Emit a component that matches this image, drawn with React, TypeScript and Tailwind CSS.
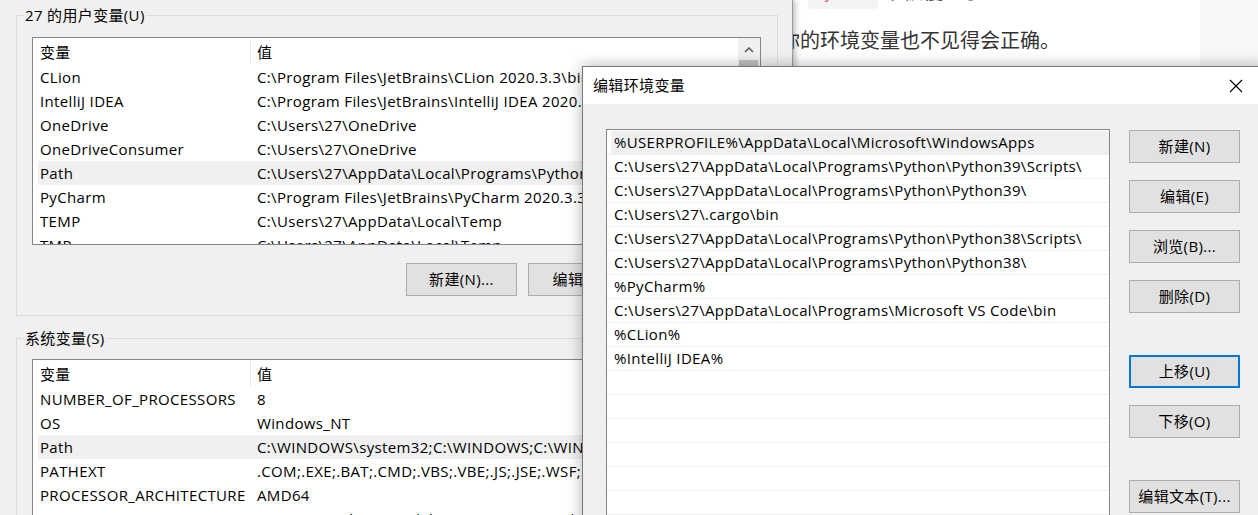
import React from "react";

const userVars: [string, string][] = [
  ["CLion", "C:\\Program Files\\JetBrains\\CLion 2020.3.3\\bin"],
  ["IntelliJ IDEA", "C:\\Program Files\\JetBrains\\IntelliJ IDEA 2020.3.3\\bin"],
  ["OneDrive", "C:\\Users\\27\\OneDrive"],
  ["OneDriveConsumer", "C:\\Users\\27\\OneDrive"],
  ["Path", "C:\\Users\\27\\AppData\\Local\\Programs\\Python\\Python39\\Scripts\\;"],
  ["PyCharm", "C:\\Program Files\\JetBrains\\PyCharm 2020.3.3\\bin"],
  ["TEMP", "C:\\Users\\27\\AppData\\Local\\Temp"],
  ["TMP", "C:\\Users\\27\\AppData\\Local\\Temp"],
];

const sysVars: [string, string][] = [
  ["NUMBER_OF_PROCESSORS", "8"],
  ["OS", "Windows_NT"],
  ["Path", "C:\\WINDOWS\\system32;C:\\WINDOWS;C:\\WINDOWS\\System32\\Wbem;"],
  ["PATHEXT", ".COM;.EXE;.BAT;.CMD;.VBS;.VBE;.JS;.JSE;.WSF;.WSH;.MSC"],
  ["PROCESSOR_ARCHITECTURE", "AMD64"],
  ["PROCESSOR_IDENTIFIER", "AMD64 Family 23 Model 24 Stepping 1, AuthenticAMD"],
];

const paths: string[] = [
  "%USERPROFILE%\\AppData\\Local\\Microsoft\\WindowsApps",
  "C:\\Users\\27\\AppData\\Local\\Programs\\Python\\Python39\\Scripts\\",
  "C:\\Users\\27\\AppData\\Local\\Programs\\Python\\Python39\\",
  "C:\\Users\\27\\.cargo\\bin",
  "C:\\Users\\27\\AppData\\Local\\Programs\\Python\\Python38\\Scripts\\",
  "C:\\Users\\27\\AppData\\Local\\Programs\\Python\\Python38\\",
  "%PyCharm%",
  "C:\\Users\\27\\AppData\\Local\\Programs\\Microsoft VS Code\\bin",
  "%CLion%",
  "%IntelliJ IDEA%",
  "",
  "",
  "",
  "",
  "",
  "",
];

function Btn({ label, focused, className }: { label: string; focused?: boolean; className?: string }) {
  return (
    <div
      className={`flex h-[33px] w-[111px] shrink-0 items-center justify-center bg-[#e1e1e1] text-[15px] text-black ${
        focused ? "border-2 border-[#0078d7]" : "border border-[#adadad]"
      } ${className ?? ""}`}
    >
      {label}
    </div>
  );
}

function ListView({ rows, selected, tall }: { rows: [string, string][]; selected: number; tall?: boolean }) {
  return (
    <div
      className={`flex w-[729px] overflow-hidden border border-[#828790] bg-white ${tall ? "h-[220px]" : "h-[208px]"}`}
    >
      <div className="flex min-w-0 flex-1 flex-col">
        <div className="flex h-[27px] shrink-0 items-center">
          <div className="w-[217px] pl-[7px] pt-[1px]">变量</div>
          <div className="my-[1px] w-px self-stretch bg-[#e5e5e5]"></div>
          <div className="pl-[6px] pt-[1px]">值</div>
        </div>
        {rows.map(([k, v], i) => (
          <div
            key={k + i}
            className={`ml-[5px] flex h-6 shrink-0 items-center ${i === selected ? "bg-[#f0f0f0]" : ""}`}
          >
            <div className="w-[219px] shrink-0 overflow-hidden whitespace-nowrap pl-[2px]">{k}</div>
            <div className="min-w-0 flex-1 overflow-hidden whitespace-nowrap">{v}</div>
          </div>
        ))}
      </div>
      <div className="flex w-[22px] shrink-0 flex-col bg-[#f0f0f0]">
        <div className="flex h-[22px] shrink-0 items-center justify-center pt-[2px]">
          <svg width="10" height="6" viewBox="0 0 10 6">
            <polyline points="1,5 5,1 9,5" fill="none" stroke="#606060" strokeWidth="1.6" />
          </svg>
        </div>
        <div className="ml-[1px] mr-[2px] h-[140px] bg-[#c1c1c1]"></div>
      </div>
    </div>
  );
}

function GroupBox({
  label,
  className,
  children,
}: {
  label: string;
  className: string;
  children: React.ReactNode;
}) {
  return (
    <div className={`relative w-[762px] shrink-0 border border-[#dcdcdc] ${className}`}>
      <span className="absolute -top-[11px] left-[7px] bg-[#f0f0f0] px-[1px] leading-[20px]">{label}</span>
      {children}
    </div>
  );
}

export default function App() {
  return (
    <div className="relative h-[515px] w-[1258px] overflow-hidden font-['Open_Sans','Noto_Sans_CJK_SC',sans-serif] text-[15px] tracking-[0.35px] text-black">
      {/* web page in the background */}
      <div className="flex h-full w-full">
        <div className="flex w-[1200px] shrink-0 flex-col bg-white pl-[780px] font-['Noto_Sans_CJK_SC',sans-serif] text-[20px] tracking-normal text-[#333]">
          <p className="-mt-[23px] whitespace-nowrap leading-[28px]">
            在
            <code className="ml-2 mr-[5px] inline-block w-[70px] rounded bg-[#f3f4f4] text-center font-['Liberation_Mono',monospace] text-[16px] text-[#e83e8c]">
              Python
            </code>
            下被覆盖了。
          </p>
          <p className="mt-[17px] whitespace-nowrap leading-[28px]">你的环境变量也不见得会正确。</p>
        </div>
        <div className="flex-1 bg-[#f6f7f9]"></div>
      </div>

      {/* back window: 环境变量 */}
      <div className="absolute left-0 top-0 flex h-[515px] w-[793px] flex-col border-r border-[#9a9a9a] bg-[#f0f0f0] pl-4 shadow-[2px_0_6px_rgba(0,0,0,0.28)]">
        <GroupBox label="27 的用户变量(U)" className="mt-[15px] h-[301px]">
          <div className="pl-[15px] pt-[21px]">
            <ListView rows={userVars} selected={4} />
            <div className="mt-[18px] flex gap-[11px] pl-[374px]">
              <Btn label="新建(N)..." />
              <Btn label="编辑(E)..." />
              <Btn label="删除(D)" />
            </div>
          </div>
        </GroupBox>
        <GroupBox label="系统变量(S)" className="mt-[22px] h-[200px]">
          <div className="pl-[15px] pt-[20px]">
            <ListView rows={sysVars} selected={2} tall />
          </div>
        </GroupBox>
      </div>

      {/* front dialog: 编辑环境变量 */}
      <div className="absolute left-[582px] top-[66px] flex h-[470px] w-[684px] flex-col border border-[#7a7a7a] bg-[#f0f0f0] shadow-[0_0_14px_rgba(0,0,0,0.3)]">
        <div className="flex h-[37px] shrink-0 items-center bg-white">
          <div className="pl-[10px]">编辑环境变量</div>
          <div className="ml-auto flex h-full w-[58px] items-center justify-center">
            <svg width="14" height="14" viewBox="0 0 14 14">
              <line x1="1" y1="1" x2="13" y2="13" stroke="#000" strokeWidth="1.1" />
              <line x1="13" y1="1" x2="1" y2="13" stroke="#000" strokeWidth="1.1" />
            </svg>
          </div>
        </div>
        <div className="flex flex-1 pl-[23px] pt-[25px]">
          <div className="h-[420px] w-[504px] shrink-0 overflow-hidden border border-[#828790] bg-white pt-[1px]">
            {paths.map((p, i) => (
              <div key={i} className="h-6 border-b border-[#f0f0f0]">
                <div
                  className={`ml-[4px] flex h-full items-center whitespace-nowrap pl-[3px] ${
                    i === 0 ? "bg-[#f0f0f0]" : ""
                  }`}
                >
                  {p}
                </div>
              </div>
            ))}
          </div>
          <div className="ml-[19px] flex flex-col pt-[1px]">
            <Btn label="新建(N)" />
            <Btn label="编辑(E)" className="mt-[17px]" />
            <Btn label="浏览(B)..." className="mt-[17px]" />
            <Btn label="删除(D)" className="mt-[17px]" />
            <Btn label="上移(U)" focused className="mt-[42px]" />
            <Btn label="下移(O)" className="mt-[17px]" />
            <Btn label="编辑文本(T)..." className="mt-[42px]" />
          </div>
        </div>
      </div>
    </div>
  );
}
